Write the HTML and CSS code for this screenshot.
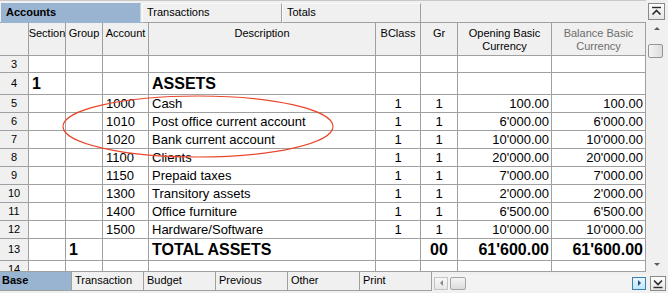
FILE: index.html
```html
<!DOCTYPE html>
<html>
<head>
<meta charset="utf-8">
<link rel="stylesheet" href="styles.css">
</head>
<body>
<div class="app">
  <div class="main">
    <div class="sheet">
      <div class="tabs-top">
        <div class="tab active w1">Accounts</div>
        <div class="tab w2">Transactions</div>
        <div class="tab w3">Totals</div>
      </div>
      <table class="grid">
        <colgroup>
          <col class="c-rn"><col class="c-sec"><col class="c-grp"><col class="c-acc"><col class="c-desc"><col class="c-bc"><col class="c-gr"><col class="c-amt"><col class="c-amt">
        </colgroup>
        <thead>
          <tr class="h-head">
            <th class="rn"></th>
            <th><div class="ovc">Section</div></th>
            <th>Group</th>
            <th>Account</th>
            <th>Description</th>
            <th>BClass</th>
            <th>Gr</th>
            <th>Opening Basic<br>Currency</th>
            <th class="dim">Balance Basic<br>Currency</th>
          </tr>
        </thead>
        <tbody>
          <tr class="h17"><td class="rn">3</td><td></td><td></td><td></td><td></td><td></td><td></td><td></td><td></td></tr>
          <tr class="h22 bold"><td class="rn">4</td><td>1</td><td></td><td></td><td class="wide">ASSETS</td><td></td><td></td><td></td><td></td></tr>
          <tr class="h18"><td class="rn">5</td><td></td><td></td><td>1000</td><td>Cash</td><td class="c">1</td><td class="c">1</td><td class="num">100.00</td><td class="num">100.00</td></tr>
          <tr class="h18"><td class="rn">6</td><td></td><td></td><td>1010</td><td>Post office current account</td><td class="c">1</td><td class="c">1</td><td class="num">6'000.00</td><td class="num">6'000.00</td></tr>
          <tr class="h18"><td class="rn">7</td><td></td><td></td><td>1020</td><td>Bank current account</td><td class="c">1</td><td class="c">1</td><td class="num">10'000.00</td><td class="num">10'000.00</td></tr>
          <tr class="h18"><td class="rn">8</td><td></td><td></td><td>1100</td><td>Clients</td><td class="c">1</td><td class="c">1</td><td class="num">20'000.00</td><td class="num">20'000.00</td></tr>
          <tr class="h18"><td class="rn">9</td><td></td><td></td><td>1150</td><td>Prepaid taxes</td><td class="c">1</td><td class="c">1</td><td class="num">7'000.00</td><td class="num">7'000.00</td></tr>
          <tr class="h18"><td class="rn">10</td><td></td><td></td><td>1300</td><td>Transitory assets</td><td class="c">1</td><td class="c">1</td><td class="num">2'000.00</td><td class="num">2'000.00</td></tr>
          <tr class="h18"><td class="rn">11</td><td></td><td></td><td>1400</td><td>Office furniture</td><td class="c">1</td><td class="c">1</td><td class="num">6'500.00</td><td class="num">6'500.00</td></tr>
          <tr class="h18"><td class="rn">12</td><td></td><td></td><td>1500</td><td>Hardware/Software</td><td class="c">1</td><td class="c">1</td><td class="num">10'000.00</td><td class="num">10'000.00</td></tr>
          <tr class="h22 bold"><td class="rn">13</td><td></td><td>1</td><td></td><td class="wide">TOTAL ASSETS</td><td></td><td class="c">00</td><td class="num">61'600.00</td><td class="num">61'600.00</td></tr>
          <tr class="h18"><td class="rn">14</td><td></td><td></td><td></td><td></td><td></td><td></td><td></td><td></td></tr>
        </tbody>
      </table>
      <svg class="mark" width="646" height="272" viewBox="0 0 646 272">
        <ellipse cx="198" cy="126.5" rx="135" ry="30.5" fill="none" stroke="#e9482c" stroke-width="1.2"/>
      </svg>
    </div>
    <div class="vscroll">
      <div class="sbtn vtop">
        <svg width="15" height="15" viewBox="0 0 15 15"><path d="M3 3.5h9" stroke="#2b2b2b" stroke-width="1.4"/><path d="M3.5 10.5L7.5 6.5L11.5 10.5" fill="none" stroke="#2b2b2b" stroke-width="1.6"/></svg>
      </div>
      <div class="arr-up"></div>
      <div class="vthumb"></div>
      <div class="flex1"></div>
      <div class="arr-down"></div>
    </div>
  </div>
  <div class="bottom">
    <div class="tabs-bottom">
      <div class="btab active">Base</div>
      <div class="btab">Transaction</div>
      <div class="btab">Budget</div>
      <div class="btab">Previous</div>
      <div class="btab">Other</div>
      <div class="btab">Print</div>
    </div>
    <div class="hscroll">
      <div class="hbtn"><span class="arr-left"></span></div>
      <div class="hthumb"></div>
      <div class="flex1"></div>
      <div class="hbtn hot"><span class="arr-right"></span></div>
    </div>
    <div class="sbtn corner">
      <svg width="14" height="13" viewBox="0 0 14 13"><path d="M3 3.5L7 7.5L11 3.5" fill="none" stroke="#2b2b2b" stroke-width="1.6"/><path d="M2.5 10.5h9" stroke="#2b2b2b" stroke-width="1.4"/></svg>
    </div>
  </div>
</div>
</body>
</html>
```
FILE: styles.css
```css
html, body {
  margin: 0;
  padding: 0;
}
body {
  width: 668px;
  height: 293px;
  overflow: hidden;
  background: #f0f0f0;
  font-family: "Liberation Sans", Arial, sans-serif;
  color: #000;
}
.app {
  width: 668px;
  height: 293px;
  display: flex;
  flex-direction: column;
}
.main {
  display: flex;
  height: 272px;
}
.sheet {
  position: relative;
  width: 646px;
  height: 272px;
  overflow: hidden;
  border-bottom: 1px solid #a0a0a0;
  box-sizing: border-box;
}
.tabs-top {
  display: flex;
  height: 22px;
  padding: 3px 0 0 1px;
  box-sizing: border-box;
  border-top: 1px solid #c9c9c9;
}
.tab {
  height: 19px;
  box-sizing: border-box;
  font-size: 11px;
  line-height: 17px;
  padding-left: 4px;
  border: 1px solid #fafafa;
  border-right-color: #a0a0a0;
  border-bottom-color: #a0a0a0;
  background: #f0f0f0;
  margin-top: -1px;
  height: 20px;
}
.tab.w1 { width: 140px; }
.tab.w2 { width: 140px; margin-left: 1px; }
.tab.w3 { width: 139px; }
.tab.active {
  background: #99b4d1;
  font-weight: bold;
  border-color: #99b4d1;
  border-right-color: #c7d5e4;
}
.grid {
  border-collapse: separate;
  border-spacing: 0;
  table-layout: fixed;
  width: 646px;
  font-size: 13px;
}
.c-rn { width: 29px; }
.c-sec { width: 37px; }
.c-grp { width: 37px; }
.c-acc { width: 46px; }
.c-desc { width: 227px; }
.c-bc { width: 45px; }
.c-gr { width: 37px; }
.c-amt { width: 94px; }
.grid th, .grid td {
  border-right: 1px solid #a0a0a0;
  border-bottom: 1px solid #a0a0a0;
  white-space: nowrap;
  overflow: hidden;
  padding: 0 3px;
  box-sizing: border-box;
}
.grid td {
  background: #fff;
  line-height: 15px;
  vertical-align: middle;
}
.grid th {
  background: #f0f0f0;
  font-weight: normal;
  font-size: 11px;
  line-height: 13px;
  vertical-align: top;
  text-align: center;
  padding-top: 4px;
  border-top: 1px solid #a0a0a0;
  padding-left: 0;
  padding-right: 0;
}
.grid th.dim { color: #6d6d6d; }
.ovc {
  display: flex;
  justify-content: center;
  white-space: nowrap;
}
.h-head { height: 34px; }
.h17 { height: 17px; }
.h18 { height: 18px; }
.h22 { height: 22px; }
.grid td.rn, .grid th.rn {
  background: #f0f0f0;
  text-align: center;
  font-size: 11px;
  padding: 0;
}
.grid td.rn { vertical-align: top; line-height: 14px; padding-top: 1px; }
.h22 td.rn { padding-top: 3px; }
.grid td.c { text-align: center; padding: 0; }
.grid td.num { text-align: right; padding-right: 2px; padding-left: 0; }
.bold td {
  font-weight: bold;
  font-size: 16px;
}
.bold td.rn { font-weight: normal; font-size: 11px; }
.mark {
  position: absolute;
  left: 0;
  top: 0;
  pointer-events: none;
}
.vscroll {
  width: 22px;
  height: 272px;
  display: flex;
  flex-direction: column;
}
.sbtn {
  box-sizing: border-box;
  border: 1px solid #8a8a8a;
  background: linear-gradient(#fdfdfd, #e6e6e6);
  display: flex;
  align-items: center;
  justify-content: center;
}
.vtop {
  width: 17px;
  height: 17px;
  margin: 3px 0 0 2px;
}
.arr-up {
  width: 0;
  height: 0;
  border-left: 3px solid transparent;
  border-right: 3px solid transparent;
  border-bottom: 3px solid #5c5c5c;
  margin: 7px 0 0 8px;
}
.vthumb {
  width: 15px;
  height: 14px;
  margin: 14px 0 0 2px;
  box-sizing: border-box;
  border: 1px solid #959595;
  border-radius: 2px;
  background: linear-gradient(to right, #f4f4f4, #dcdcdc);
}
.flex1 { flex: 1; }
.arr-down {
  width: 0;
  height: 0;
  border-left: 3px solid transparent;
  border-right: 3px solid transparent;
  border-top: 3px solid #5c5c5c;
  margin: 0 0 6px 8px;
}
.bottom {
  display: flex;
  height: 21px;
}
.tabs-bottom {
  display: flex;
  padding-top: 0;
}
.btab {
  width: 72px;
  height: 19px;
  box-sizing: border-box;
  font-size: 11px;
  line-height: 17px;
  padding-left: 3px;
  border-right: 1px solid #a0a0a0;
  border-bottom: 1px solid #a0a0a0;
  background: #f0f0f0;
}
.btab.active {
  background: #99b4d1;
  font-weight: bold;
  padding-left: 2px;
}
.hscroll {
  width: 212px;
  margin-left: 2px;
  height: 16px;
  margin-top: 3px;
  display: flex;
  align-items: center;
  background: #f3f3f3;
}
.hbtn {
  width: 14px;
  height: 13px;
  box-sizing: border-box;
  border: 1px solid #c4c4c4;
  background: linear-gradient(#f8f8f8, #e6e6e6);
  display: flex;
  align-items: center;
  justify-content: center;
}
.hbtn.hot {
  border-color: #3c7fb1;
  background: linear-gradient(#eaf6fd, #bee6fd);
}
.arr-left {
  width: 0;
  height: 0;
  border-top: 3px solid transparent;
  border-bottom: 3px solid transparent;
  border-right: 3px solid #8a8a8a;
}
.arr-right {
  width: 0;
  height: 0;
  border-top: 3px solid transparent;
  border-bottom: 3px solid transparent;
  border-left: 3px solid #1f4f7a;
}
.hthumb {
  width: 16px;
  height: 13px;
  margin-left: 2px;
  box-sizing: border-box;
  border: 1px solid #a5a5a5;
  border-radius: 2px;
  background: linear-gradient(#f4f4f4, #dcdcdc);
}
.corner {
  width: 16px;
  height: 15px;
  margin: 4px 0 0 4px;
}
```
